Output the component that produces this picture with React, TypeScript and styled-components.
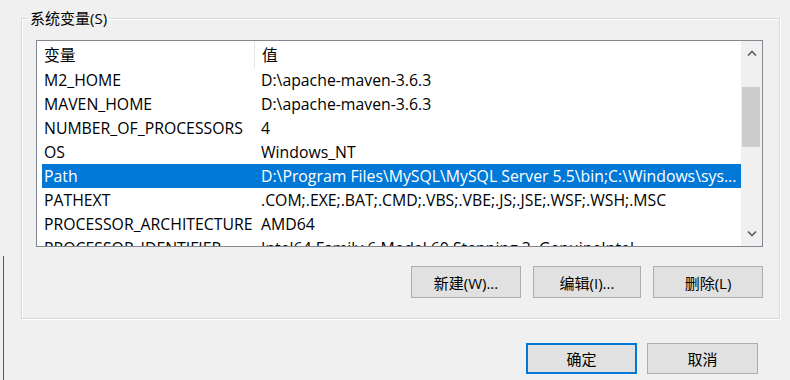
import React from "react";
import styled, { createGlobalStyle } from "styled-components";

const Global = createGlobalStyle`
  html, body { margin: 0; padding: 0; background: #f0f0f0; }
  body {
    font-family: "Open Sans", "Noto Sans CJK SC", sans-serif;
    font-size: 15.8px;
    color: #000;
  }
`;

const Page = styled.div`
  position: relative;
  width: 790px;
  height: 380px;
  box-sizing: border-box;
  padding: 9px 10px 0 21px;
  display: flex;
  flex-direction: column;
  overflow: hidden;
  background: #f0f0f0;

  &::before {
    content: "";
    position: absolute;
    left: 3px;
    top: 256px;
    bottom: 0;
    width: 1px;
    background: #5a5a5a;
  }
`;

const Group = styled.fieldset`
  margin: 0;
  padding: 13px 16px 20px 14px;
  border: 1px solid #d9d9d9;
  box-shadow: inset 1px 1px 0 #ffffff, 1px 1px 0 #ffffff;
  height: 310px;
  box-sizing: border-box;
  display: flex;
  flex-direction: column;
  min-width: 0;
`;

const Legend = styled.legend`
  padding: 0 2px;
  margin-left: -8px;
  font-size: 15px;
  line-height: 18px;
  color: #000;
`;

const ListBox = styled.div`
  border: 1px solid #828790;
  background: #fff;
  height: 207px;
  box-sizing: border-box;
  display: flex;
  overflow: hidden;
`;

const ListBody = styled.div`
  flex: 1;
  min-width: 0;
  overflow: hidden;
  display: flex;
  flex-direction: column;
`;

const HeaderRow = styled.div`
  display: grid;
  grid-template-columns: 217px 1fr;
  height: 27px;
  flex: none;
  align-items: center;
`;

const HeaderCell = styled.div<{ $divider?: boolean }>`
  height: 100%;
  display: flex;
  align-items: center;
  padding-left: 7px;
  box-sizing: border-box;
  white-space: nowrap;
  ${(p) => (p.$divider ? "border-left: 1px solid #e5e5e5;" : "")}
`;

const Row = styled.div<{ $selected?: boolean }>`
  display: grid;
  grid-template-columns: 212px 1fr;
  height: 24px;
  flex: none;
  margin-left: 5px;
  align-items: center;
  white-space: nowrap;
  background: ${(p) => (p.$selected ? "#0078d7" : "transparent")};
  color: ${(p) => (p.$selected ? "#ffffff" : "#000000")};
`;

const NameCell = styled.div`
  padding-left: 2px;
  overflow: hidden;
`;

const ValueCell = styled.div`
  padding-left: 7px;
  overflow: hidden;
`;

const ScrollBar = styled.div`
  width: 21px;
  flex: none;
  background: #f0f0f0;
  display: flex;
  flex-direction: column;
  align-items: center;
`;

const ArrowButton = styled.div`
  height: 24px;
  width: 100%;
  flex: none;
  display: flex;
  align-items: center;
  justify-content: center;
`;

const Track = styled.div`
  flex: 1;
  width: 100%;
  display: flex;
  flex-direction: column;
  padding-top: 22px;
  box-sizing: border-box;
`;

const Thumb = styled.div`
  height: 60px;
  margin: 0 2px 0 1px;
  background: #cdcdcd;
`;

const ButtonRow = styled.div<{ $gap: number }>`
  display: flex;
  justify-content: flex-end;
  gap: ${(p) => p.$gap}px;
`;

const Button = styled.button<{ $default?: boolean; $h: number; $w: number }>`
  width: ${(p) => p.$w}px;
  height: ${(p) => p.$h}px;
  box-sizing: border-box;
  background: #e1e1e1;
  border: ${(p) => (p.$default ? "2px solid #0078d7" : "1px solid #adadad")};
  font-family: "Open Sans", "Noto Sans CJK SC", sans-serif;
  font-size: 15px;
  color: #000;
  padding: 0;
  display: flex;
  align-items: center;
  justify-content: center;
`;

const GroupButtons = styled(ButtonRow)`
  margin-top: 19px;
`;

const DialogButtons = styled(ButtonRow)`
  margin-top: 24px;
  padding-right: 22px;
`;

const Chevron = ({ up }: { up?: boolean }) => (
  <svg width="10" height="6" viewBox="0 0 10 6">
    <path
      d={up ? "M1 5.5 L5 1.5 L9 5.5" : "M1 0.5 L5 4.5 L9 0.5"}
      fill="none"
      stroke="#606060"
      strokeWidth="1.6"
    />
  </svg>
);

const rows: [string, string][] = [
  ["M2_HOME", "D:\\apache-maven-3.6.3"],
  ["MAVEN_HOME", "D:\\apache-maven-3.6.3"],
  ["NUMBER_OF_PROCESSORS", "4"],
  ["OS", "Windows_NT"],
  ["Path", "D:\\Program Files\\MySQL\\MySQL Server 5.5\\bin;C:\\Windows\\sys..."],
  ["PATHEXT", ".COM;.EXE;.BAT;.CMD;.VBS;.VBE;.JS;.JSE;.WSF;.WSH;.MSC"],
  ["PROCESSOR_ARCHITECTURE", "AMD64"],
  ["PROCESSOR_IDENTIFIER", "Intel64 Family 6 Model 60 Stepping 3, GenuineIntel"],
];

export default function App() {
  return (
    <>
      <Global />
      <Page>
        <Group>
          <Legend>系统变量(S)</Legend>
          <ListBox>
            <ListBody>
              <HeaderRow>
                <HeaderCell>变量</HeaderCell>
                <HeaderCell $divider>值</HeaderCell>
              </HeaderRow>
              {rows.map(([n, v]) => (
                <Row key={n} $selected={n === "Path"}>
                  <NameCell>{n}</NameCell>
                  <ValueCell>{v}</ValueCell>
                </Row>
              ))}
            </ListBody>
            <ScrollBar>
              <ArrowButton>
                <Chevron up />
              </ArrowButton>
              <Track>
                <Thumb />
              </Track>
              <ArrowButton>
                <Chevron />
              </ArrowButton>
            </ScrollBar>
          </ListBox>
          <GroupButtons $gap={12}>
            <Button $w={110} $h={32}>新建(W)...</Button>
            <Button $w={108} $h={32}>编辑(I)...</Button>
            <Button $w={110} $h={32}>删除(L)</Button>
          </GroupButtons>
        </Group>
        <DialogButtons $gap={10}>
          <Button $default $w={111} $h={31}>确定</Button>
          <Button $w={111} $h={31}>取消</Button>
        </DialogButtons>
      </Page>
    </>
  );
}
